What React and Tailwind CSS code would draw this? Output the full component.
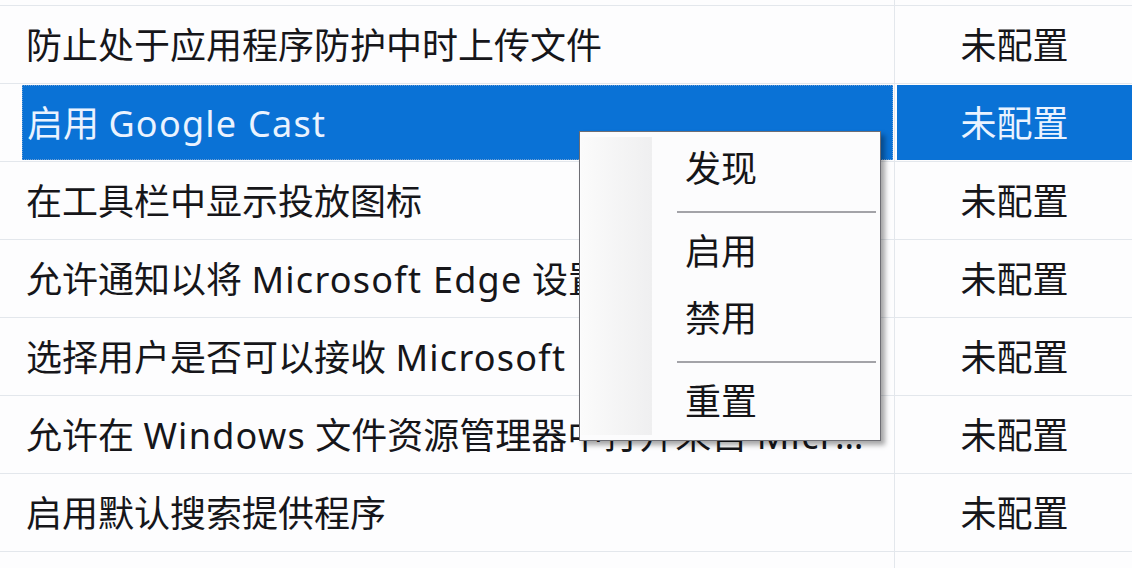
const ROWS = [
  { name: '防止处于应用程序防护中时上传文件', state: '未配置' },
  { name: '启用 Google Cast', state: '未配置', selected: true },
  { name: '在工具栏中显示投放图标', state: '未配置' },
  { name: '允许通知以将 Microsoft Edge 设置为默认 PDF 阅读器', state: '未配置' },
  { name: '选择用户是否可以接收 Microsoft Edge 应用的自定义背景图像和文本、建议、通知和提示', state: '未配置' },
  { name: '允许在 Windows 文件资源管理器中打开来自 Microsoft Edge 的 SharePoint 文件', state: '未配置' },
  { name: '启用默认搜索提供程序', state: '未配置' },
]

const FONT = { fontFamily: '"Noto Sans", "Noto Sans CJK SC", sans-serif' }

// Latin runs get a touch of tracking so they read like the Segoe-ish UI font
function Label({ text }) {
  const parts = text.split(/([A-Za-z][A-Za-z ]*[A-Za-z])/)
  return parts.map((p, i) =>
    /[A-Za-z]/.test(p) ? (
      <span key={i} className="tracking-[0.035em]">
        {p}
      </span>
    ) : (
      <span key={i}>{p}</span>
    ),
  )
}

function Row({ name, state, selected }) {
  return (
    <div className="flex h-[78px] border-b border-[#e3e7ec]">
      <div className="ml-[22px] flex w-[873px] shrink-0 border-r border-[#e3e7ec] pr-[1px]">
        <div
          className={[
            'mb-[1px] mt-[1px] flex min-w-0 flex-1 items-center pl-[4px] pr-[26px] pt-[3px]',
            selected ? 'border border-dotted border-[#6f9fd2] bg-[#0a72d6] text-[#eaf3ff]' : 'text-[#16161a]',
          ].join(' ')}
        >
          <span className="truncate text-[36px] leading-[1.4]">
            <Label text={name} />
          </span>
        </div>
      </div>
      <div className="flex flex-1 pl-[2px]">
        <div
          className={[
            'mb-[1px] mt-[1px] flex flex-1 items-center justify-center pt-[3px]',
            selected ? 'bg-[#0a72d6] text-[#eaf3ff]' : 'text-[#16161a]',
          ].join(' ')}
        >
          <span className="text-[36px] leading-[1.4]">{state}</span>
        </div>
      </div>
    </div>
  )
}

function MenuItem({ label }) {
  return (
    <div className="flex h-[67px] items-center pl-[105px] pt-[3px] text-[36px] leading-[1.4] text-[#151518]">
      {label}
    </div>
  )
}

function Separator() {
  return (
    <div className="flex h-[16px] items-center pl-[97px] pr-[4px] pt-[6px]">
      <div className="h-[1.5px] w-full bg-[#a3a3a8]" />
    </div>
  )
}

export default function App() {
  return (
    <div className="relative h-[568px] w-[1132px] overflow-hidden bg-[#fdfdfe]" style={FONT}>
      <div className="flex h-[6px] border-b border-[#e3e7ec]">
        <div className="ml-[22px] w-[873px] border-r border-[#e3e7ec]" />
      </div>
      {ROWS.map((r) => (
        <Row key={r.name} {...r} />
      ))}
      <div className="flex h-[20px]">
        <div className="ml-[22px] w-[873px] border-r border-[#e3e7ec]" />
      </div>

      {/* context menu */}
      <div className="absolute left-[579px] top-[131px] flex h-[310px] w-[302px] border border-[#6e6e74] bg-[#fcfcfd] shadow-[4px_4px_5px_rgba(0,0,0,0.35)]">
        <div className="my-[5px] ml-[1px] w-[71px] shrink-0 bg-gradient-to-r from-[#fbfbfb] to-[#efeff0]" />
        <div className="ml-[-72px] flex flex-1 flex-col pt-[2px]">
          <MenuItem label="发现" />
          <Separator />
          <MenuItem label="启用" />
          <MenuItem label="禁用" />
          <Separator />
          <MenuItem label="重置" />
        </div>
      </div>
    </div>
  )
}
